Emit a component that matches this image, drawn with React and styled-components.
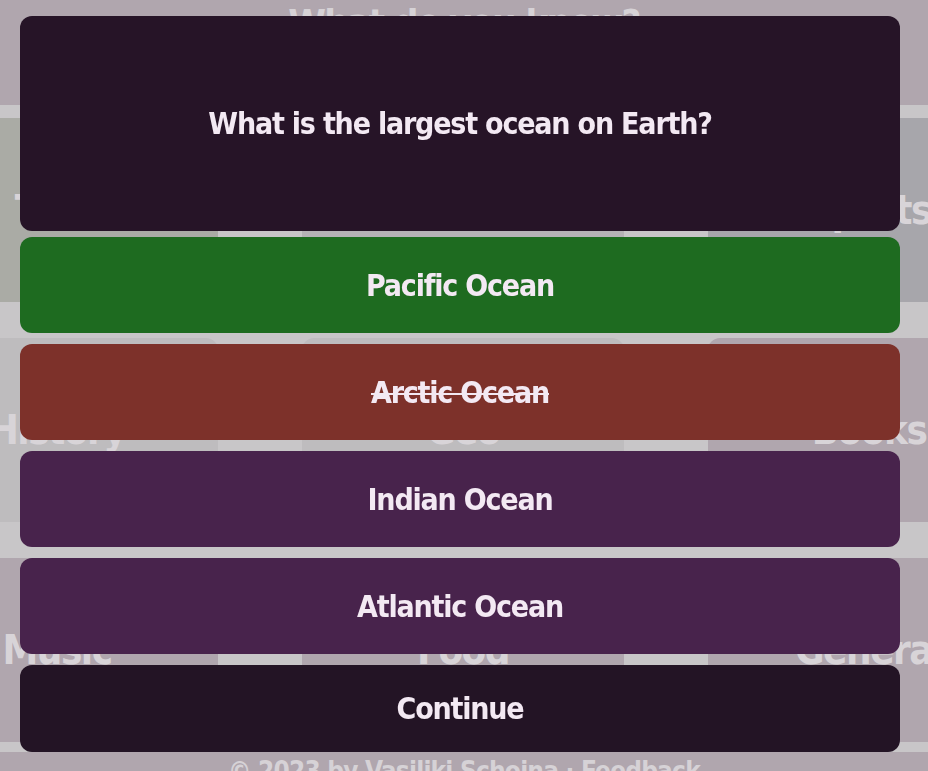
import React from "react";
import styled, { createGlobalStyle } from "styled-components";

const font = `"Liberation Sans Narrow", "DejaVu Sans Condensed", "Open Sans", sans-serif`;

const GlobalStyle = createGlobalStyle`
    html, body {
        margin: 0;
        padding: 0;
        background: #b0a6ae;
        overflow: hidden;
    }
    * {
        box-sizing: border-box;
    }
`;

const categories = [
    { name: "Tech", bg: "#aaaba5" },
    { name: "Movies", bg: "#b6b2b6" },
    { name: "Sports", bg: "#a7a6ab" },
    { name: "History", bg: "#bebcbe" },
    { name: "Geo", bg: "#bebcbe" },
    { name: "Books", bg: "#b0a6ae" },
    { name: "Music", bg: "#b0a6ae" },
    { name: "Food", bg: "#b0a6ae" },
    { name: "General", bg: "#b0a6ae" },
];

const answers = [
    { text: "Pacific Ocean", state: "correct" },
    { text: "Arctic Ocean", state: "wrong" },
    { text: "Indian Ocean", state: "idle" },
    { text: "Atlantic Ocean", state: "idle" },
];

const answerBg = {
    correct: "#1e6b20",
    wrong: "#7d312a",
    idle: "#48234c",
};

function App() {
    return (
        <>
            <GlobalStyle />
            <Page>
                <Title>What do you know?</Title>
                <CategorySection>
                    <CategoryGrid>
                        {categories.map((c) => (
                            <CategoryCard key={c.name} $bg={c.bg}>
                                {c.name}
                            </CategoryCard>
                        ))}
                    </CategoryGrid>
                </CategorySection>
                <Footer>© 2023 by Vasiliki Schoina · Feedback</Footer>
            </Page>
            <Overlay>
                <Modal>
                    <QuestionCard>What is the largest ocean on Earth?</QuestionCard>
                    <Answers>
                        {answers.map((a) => (
                            <AnswerButton key={a.text} $state={a.state}>
                                {a.text}
                            </AnswerButton>
                        ))}
                        <ContinueButton>Continue</ContinueButton>
                    </Answers>
                </Modal>
            </Overlay>
        </>
    );
}

export default App;

const Page = styled.div`
    width: 928px;
    height: 771px;
    display: flex;
    flex-direction: column;
    overflow: hidden;
    font-family: ${font};
    font-weight: 700;
    color: #d6d2d6;

    & > * {
        flex-shrink: 0;
    }
`;

const Title = styled.h1`
    margin: 0;
    padding-top: 3px;
    height: 105px;
    text-align: center;
    font-size: 38px;
    line-height: 40px;
    letter-spacing: -1.5px;
    color: #d6d2d6;
`;

const CategorySection = styled.div`
    background: #c8c6c8;
    padding: 13px 0 10px;
    display: flex;
    justify-content: center;
`;

const CategoryGrid = styled.div`
    display: grid;
    grid-template-columns: repeat(3, 322px);
    grid-auto-rows: 184px;
    column-gap: 84px;
    row-gap: 36px;
    margin-left: -2px;
`;

const CategoryCard = styled.div`
    background: ${(p) => p.$bg};
    border-radius: 12px;
    display: flex;
    align-items: center;
    justify-content: center;
    font-size: 40px;
    letter-spacing: -1.5px;
    color: #d8d4d8;
`;

const Footer = styled.div`
    text-align: center;
    font-size: 26px;
    letter-spacing: -0.8px;
    padding-top: 4px;
    color: #d6d2d6;
`;

const Overlay = styled.div`
    position: fixed;
    inset: 0;
    display: flex;
    justify-content: flex-start;
    padding: 16px 20px;
`;

const Modal = styled.div`
    width: 880px;
    display: flex;
    flex-direction: column;
    gap: 6px;
    font-family: ${font};
    font-weight: 700;
    font-size: 30px;
    letter-spacing: -1.2px;
    color: #f3e9f3;
`;

const QuestionCard = styled.div`
    height: 215px;
    background: #261427;
    border-radius: 12px;
    display: flex;
    align-items: center;
    justify-content: center;
`;

const Answers = styled.div`
    display: flex;
    flex-direction: column;
    gap: 11px;
`;

const AnswerButton = styled.div`
    height: 96px;
    background: ${(p) => answerBg[p.$state]};
    border-radius: 12px;
    display: flex;
    align-items: center;
    justify-content: center;
    text-decoration: ${(p) => (p.$state === "wrong" ? "line-through" : "none")};
    text-decoration-thickness: 2px;
`;

const ContinueButton = styled.div`
    height: 87px;
    background: #231425;
    border-radius: 12px;
    display: flex;
    align-items: center;
    justify-content: center;
`;
